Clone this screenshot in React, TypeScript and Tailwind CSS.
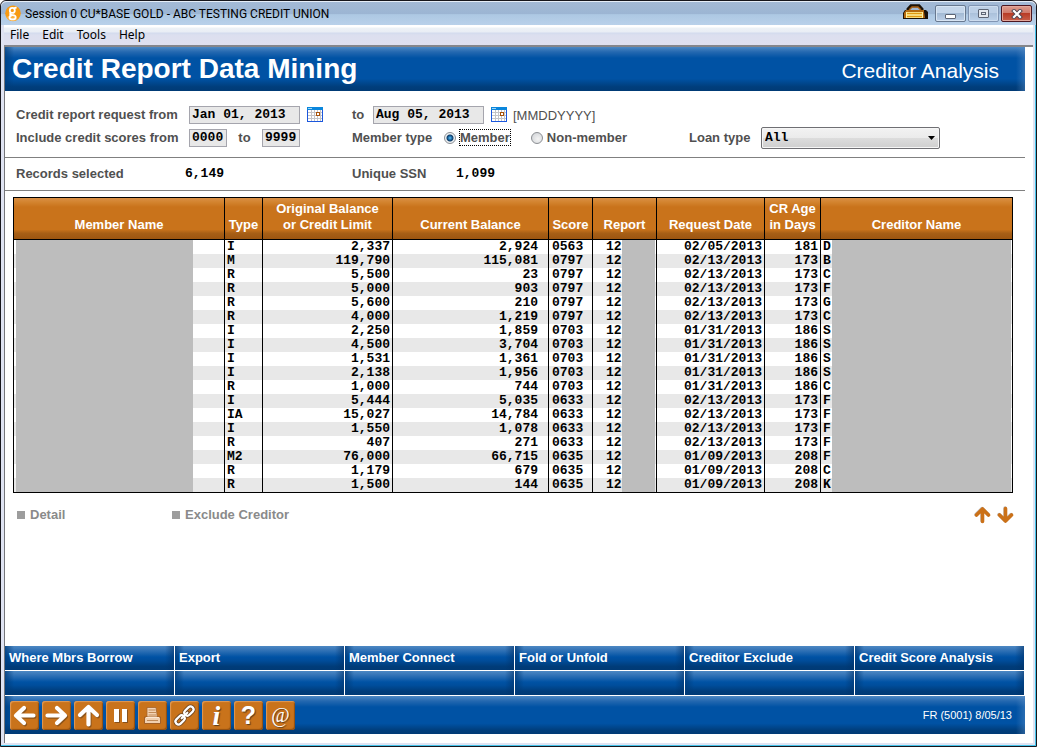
import React from "react";

type Row = [string, string, string, string, string, string, string];

const rows: Row[] = [
  ["I", "2,337", "2,924", "0563", "02/05/2013", "181", "D"],
  ["M", "119,790", "115,081", "0797", "02/13/2013", "173", "B"],
  ["R", "5,500", "23", "0797", "02/13/2013", "173", "C"],
  ["R", "5,000", "903", "0797", "02/13/2013", "173", "F"],
  ["R", "5,600", "210", "0797", "02/13/2013", "173", "G"],
  ["R", "4,000", "1,219", "0797", "02/13/2013", "173", "C"],
  ["I", "2,250", "1,859", "0703", "01/31/2013", "186", "S"],
  ["I", "4,500", "3,704", "0703", "01/31/2013", "186", "S"],
  ["I", "1,531", "1,361", "0703", "01/31/2013", "186", "S"],
  ["I", "2,138", "1,956", "0703", "01/31/2013", "186", "S"],
  ["R", "1,000", "744", "0703", "01/31/2013", "186", "C"],
  ["I", "5,444", "5,035", "0633", "02/13/2013", "173", "F"],
  ["IA", "15,027", "14,784", "0633", "02/13/2013", "173", "F"],
  ["I", "1,550", "1,078", "0633", "02/13/2013", "173", "F"],
  ["R", "407", "271", "0633", "02/13/2013", "173", "F"],
  ["M2", "76,000", "66,715", "0635", "01/09/2013", "208", "F"],
  ["R", "1,179", "679", "0635", "01/09/2013", "208", "C"],
  ["R", "1,500", "144", "0635", "01/09/2013", "208", "K"],
];

const columns: { label: string[]; width: string }[] = [
  { label: ["Member Name"], width: "w-[211px]" },
  { label: ["Type"], width: "w-[38px]" },
  { label: ["Original Balance", "or Credit Limit"], width: "w-[130px]" },
  { label: ["Current Balance"], width: "w-[156px]" },
  { label: ["Score"], width: "w-[44px]" },
  { label: ["Report"], width: "w-[64px]" },
  { label: ["Request Date"], width: "w-[108px]" },
  { label: ["CR Age", "in Days"], width: "w-[56px]" },
  { label: ["Creditor Name"], width: "" },
];

const mono = "font-['Liberation_Mono',monospace] text-[13px] font-bold text-black";
const field = `${mono} h-[18px] border border-[#a5a5ad] bg-[#e8e8e8] px-[2px] outline-none`;
const banner =
  "bg-[linear-gradient(to_right,rgba(0,60,122,0.7)_0px,rgba(0,60,122,0)_9px),linear-gradient(to_left,rgba(90,140,195,0.45)_0px,rgba(90,140,195,0)_9px),linear-gradient(to_bottom,#4d88c3_0px,#2468b0_5px,#0052a4_11px,#0052a4_72%,#003e7c_90%,#003a75_100%)]";
const keyFace =
  "bg-[linear-gradient(to_right,rgba(0,60,122,0.8)_0px,rgba(0,60,122,0)_9px),linear-gradient(to_left,rgba(0,50,105,0.6)_0px,rgba(0,50,105,0)_9px),linear-gradient(to_bottom,#4d88c3_0px,#3474b7_4px,#0052a4_11px,#004d9b_60%,#003c79_85%,#003a75_100%)]";

function CalendarIcon() {
  return (
    <svg width="16" height="15" viewBox="0 0 16 15" shapeRendering="crispEdges" aria-hidden="true">
      <rect width="16" height="15" fill="#1b57dd" />
      <rect x="1" y="3" width="14" height="11" fill="#fff" />
      <rect width="16" height="3" fill="#0a86dc" />
      <rect x="1" y="1" width="4" height="1" fill="#9fd4f5" />
      <path d="M4.5 3v11M7.5 3v11M10.5 3v11M13.5 3v11M1 5.5h14M1 8.5h14M1 11.5h14" stroke="#c4c4c8" />
      <rect x="9.5" y="5.5" width="3" height="3" fill="#fff" stroke="#a8520a" />
    </svg>
  );
}

function Calendar({ label }: { label: string }) {
  return (
    <button type="button" aria-label={label} className="flex">
      <CalendarIcon />
    </button>
  );
}

function Radio({ id, checked, label }: { id: string; checked?: boolean; label: string }) {
  return (
    <div className="flex items-center gap-[3px]">
      <input
        id={id}
        type="radio"
        name="member-type"
        defaultChecked={checked}
        className="size-3 appearance-none rounded-full border border-[#8b8e92] bg-[radial-gradient(circle_at_60%_60%,#f4f4f4,#cdd0d4)] checked:bg-[radial-gradient(circle,#5fc3f5_0px,#17639f_2px,#123d66_3px,#eef2f5_4px)]"
      />
      <label
        htmlFor={id}
        className={
          checked
            ? "border border-dotted border-black leading-[15px]"
            : "border border-transparent leading-[15px]"
        }
      >
        {label}
      </label>
    </div>
  );
}

const arrow = { fill: "none", strokeLinecap: "round", strokeLinejoin: "round" } as const;

function ArrowShape({ d }: { d: string }) {
  return (
    <svg width="25" height="25" viewBox="0 0 25 25" {...arrow} strokeWidth="4.2" aria-hidden="true">
      <path d={d} stroke="#5b3a1a" opacity="0.55" transform="translate(1 1.2)" />
      <path d={d} stroke="#fff" />
    </svg>
  );
}

const tools: { name: string; icon: React.ReactNode }[] = [
  { name: "Back", icon: <ArrowShape d="M21.5 12.5H4.5M12 5L4 12.5L12 20" /> },
  { name: "Forward", icon: <ArrowShape d="M3.5 12.5H20.5M13 5L21 12.5L13 20" /> },
  { name: "Up", icon: <ArrowShape d="M12.5 21.5V4.5M4 12L12.5 4L21 12" /> },
  {
    name: "Pause",
    icon: (
      <svg width="25" height="25" viewBox="0 0 25 25" aria-hidden="true">
        <path d="M7 7h5v13H7zM15 7h5v13h-5z" fill="#6b4420" opacity="0.7" />
        <path d="M6 6h5v13H6zM14 6h5v13h-5z" fill="#fff" />
      </svg>
    ),
  },
  {
    name: "Print",
    icon: (
      <svg width="25" height="25" viewBox="0 0 25 25" aria-hidden="true">
        <path d="M7 4.500h9l1.500 10H7z" fill="#f3d3b4" stroke="#a4642c" strokeWidth="0.8" />
        <path d="M8.500 7h7M8.500 9.500h7.500M8.500 12h8" stroke="#c08a58" strokeWidth="1" />
        <path d="M4.500 14h16v6.500h-16z" fill="#f1d0b0" stroke="#9a5820" strokeWidth="0.9" />
        <path d="M6 14.500h13" stroke="#fbe8d6" strokeWidth="1" />
        <path d="M7 17.500h11" stroke="#c08a58" />
      </svg>
    ),
  },
  {
    name: "Link",
    icon: (
      <svg width="25" height="25" viewBox="0 0 25 25" fill="none" aria-hidden="true">
        <g transform="rotate(-45 12.5 12.5)">
          <g stroke="#6b4420" strokeWidth="4">
            <rect x="1" y="9.500" width="10.500" height="6" rx="3" />
            <rect x="13.500" y="9.500" width="10.500" height="6" rx="3" />
            <path d="M8.500 12.500h8" strokeLinecap="round" />
          </g>
          <g stroke="#fff" strokeWidth="2.200">
            <rect x="1" y="9.500" width="10.500" height="6" rx="3" />
            <rect x="13.500" y="9.500" width="10.500" height="6" rx="3" />
            <path d="M8.500 12.500h8" strokeLinecap="round" />
          </g>
        </g>
      </svg>
    ),
  },
  {
    name: "Information",
    icon: (
      <span className="font-['Liberation_Serif',serif] text-[28px] font-bold italic leading-[25px] [text-shadow:1px_1px_1px_#5b3a1a]">
        i
      </span>
    ),
  },
  {
    name: "Help",
    icon: <span className="text-[25px] font-bold leading-[25px] [text-shadow:1px_1px_1px_#5b3a1a]">?</span>,
  },
  {
    name: "Email",
    icon: <span className="font-['Liberation_Serif',serif] text-[20px] leading-[25px] [text-shadow:1px_1px_1px_#5b3a1a]">@</span>,
  },
];

function ScrollArrow({ d, label }: { d: string; label: string }) {
  return (
    <button type="button" aria-label={label}>
      <svg width="17" height="18" viewBox="0 0 17 18" {...arrow} strokeWidth="3.6" aria-hidden="true">
        <path d={d} stroke="#8d8d95" opacity="0.6" transform="translate(-0.4 -0.4)" />
        <path d={d} stroke="#cb7118" />
      </svg>
    </button>
  );
}

function Cover() {
  return <span className="h-[14px] flex-1 bg-[#bdbdbd]" />;
}

export default function App() {
  const keys = [
    "Where Mbrs Borrow",
    "Export",
    "Member Connect",
    "Fold or Unfold",
    "Creditor Exclude",
    "Credit Score Analysis",
  ];
  return (
    <div className="flex min-h-screen flex-col rounded-t-md border border-[#16161c] bg-[#dfe3f2] font-['Liberation_Sans',Arial,sans-serif]">
      <header className="flex h-6 items-center rounded-t-md border-t border-[#e6eef8] bg-[linear-gradient(to_bottom,#a3bad6_0%,#9cb5d3_50%,#adc8e3_55%,#b9d1ea_100%)] pl-1 pr-1 font-[Roboto,sans-serif] text-[12px] text-black">
        <svg width="16" height="17" viewBox="0 0 16 17" aria-hidden="true">
          <circle cx="8" cy="8.3" r="7.8" fill="#f79a12" />
          <path d="M1 12a7.8 7.8 0 0 0 12 2.2L8 10z" fill="#fbb040" />
          <g fill="none" stroke="#fff" strokeWidth="1.8">
            <circle cx="7.3" cy="5.4" r="2.5" />
            <path d="M9 3.4l2.6-1M6 7.8c-2 1.600-.4 2.200 2 2.300 3.800.2 3.500 4.300-.4 4.300-4 0-3.800-3.500-1-3.900" />
          </g>
        </svg>
        <h1 className="ml-1 flex-1 whitespace-nowrap">Session 0 CU*BASE GOLD - ABC TESTING CREDIT UNION</h1>
        <svg width="25" height="16" viewBox="0 0 25 16" className="mb-1 mr-[7px]" aria-hidden="true">
          <path d="M5 8V5l3-3.200h8L19 5v3" fill="none" stroke="#1c1208" strokeWidth="3" />
          <path d="M6.500 8V5.500L9 3h6l2.500 2.500V8" fill="none" stroke="#a85e12" strokeWidth="1.500" />
          <path d="M2 6h21l2 2v7H0V9z" fill="#1c1208" />
          <path d="M3 6h18v2l1 6H1V9z" fill="#b4690f" />
          <path d="M3 8h17v6H3z" fill="#fff1a0" />
          <path d="M4 9.500h15M4 12.500h15" stroke="#e09a10" strokeWidth="1.400" />
        </svg>
        <div className="flex gap-[2px]">
          <button type="button" aria-label="Minimize" className="flex h-[17px] w-[31px] items-end justify-center rounded-[2px] border border-[#67788f] bg-[linear-gradient(to_bottom,#c5d6ea_45%,#a3bad4_50%,#bdd0e8)] pb-[2px] shadow-[inset_0_0_0_1px_#d8e5f3]">
            <span className="h-[5px] w-[11px] rounded-[1px] border border-[#5d6575] bg-white" />
          </button>
          <button type="button" aria-label="Maximize" className="flex h-[17px] w-[31px] items-center justify-center rounded-[2px] border border-[#8195b3] bg-[linear-gradient(to_bottom,#bccfe6_45%,#abc1db_50%,#bdd2ea)] shadow-[inset_0_0_0_1px_#cddcee]">
            <span className="flex h-[9px] w-[11px] items-center justify-center rounded-[1px] border border-[#5d6575] bg-[#e3e8f0]">
              <span className="h-[3px] w-[5px] border border-[#5d6575]" />
            </span>
          </button>
          <button type="button" aria-label="Close" className="flex h-[17px] w-[31px] items-center justify-center rounded-[2px] border border-[#4b1620] bg-[linear-gradient(to_bottom,#dd9d90_0%,#d07a6a_45%,#b83c26_50%,#c9604a_100%)] shadow-[inset_0_0_0_1px_#e3a79b]">
            <svg width="12" height="10" viewBox="0 0 12 10" strokeLinecap="square" aria-hidden="true">
              <path d="M3 2l6 6M9 2l-6 6" stroke="#4d4550" strokeWidth="4" />
              <path d="M3 2l6 6M9 2l-6 6" stroke="#fff" strokeWidth="2.200" />
            </svg>
          </button>
        </div>
      </header>

      <div className="flex flex-1 flex-col border-b border-r border-[#45c3ea] pb-[2px] pl-[3px] pr-[2px]">
        <nav className="flex h-[22px] items-center gap-[13px] border-b-2 border-[#85868b] bg-[linear-gradient(to_bottom,#ffffff_0px,#ffffff_2px,#edf2f6_3px,#e9edf5_7px,#d3dbee_8px,#dcdfef_10px,#dfe0ef_100%)] pl-[6px] font-['Noto_Sans',sans-serif] text-[12px] text-black">
          <button type="button">File</button>
          <button type="button">Edit</button>
          <button type="button">Tools</button>
          <button type="button">Help</button>
        </nav>

        <main className="flex flex-1 flex-col border-l border-[#75767b] bg-white pb-[9px] pr-2">
          <div className={`flex h-11 items-center justify-between pl-[7px] pr-[26px] text-white ${banner}`}>
            <h2 className="text-[28px] font-bold leading-8">Credit Report Data Mining</h2>
            <p className="pt-1 text-[21px] leading-6">Creditor Analysis</p>
          </div>

          <form className="grid grid-cols-[173px_163px_1fr] grid-rows-[23px_23px] items-center border-b border-[#808080] pb-2 pl-[11px] pt-3 text-[13px] font-bold text-[#505050]">
            <label htmlFor="date-from">Credit report request from</label>
            <div className="flex items-center gap-[7px]">
              <input id="date-from" defaultValue="Jan 01, 2013" className={`${field} w-[111px]`} />
              <Calendar label="Choose start date" />
            </div>
            <div className="flex items-center">
              <label htmlFor="date-to" className="w-[21px]">to</label>
              <input id="date-to" defaultValue="Aug 05, 2013" className={`${field} mr-[7px] w-[111px]`} />
              <Calendar label="Choose end date" />
              <span className="ml-[6px] pt-[2px] font-normal">[MMDDYYYY]</span>
            </div>

            <label htmlFor="score-from">Include credit scores from</label>
            <div className="flex items-center">
              <input id="score-from" defaultValue="0000" className={`${field} w-[38px]`} />
              <label htmlFor="score-to" className="w-[35px] text-center">to</label>
              <input id="score-to" defaultValue="9999" className={`${field} w-[38px]`} />
            </div>
            <div className="flex items-center">
              <span className="w-[92px]">Member type</span>
              <div className="flex w-[245px] gap-5">
                <Radio id="member" checked label="Member" />
                <Radio id="non-member" label="Non-member" />
              </div>
              <label htmlFor="loan-type" className="w-[72px]">Loan type</label>
              <div className="grid items-center">
                <select
                  id="loan-type"
                  className={`${mono} col-start-1 row-start-1 h-[22px] w-[179px] appearance-none rounded-[2px] border border-[#6f6f73] bg-[linear-gradient(to_bottom,#f2f2f2_0%,#ebebeb_48%,#dcdcdc_52%,#cfcfcf_100%)] pl-[3px] shadow-[inset_0_0_0_1px_#f6f6f6]`}
                >
                  <option>All</option>
                </select>
                <svg width="7" height="4" viewBox="0 0 7 4" className="pointer-events-none col-start-1 row-start-1 mr-[5px] justify-self-end" aria-hidden="true">
                  <path d="M0 0h7L3.500 4z" fill="#000" />
                </svg>
              </div>
            </div>
          </form>

          <dl className="grid h-[33px] grid-cols-[169px_167px_104px_1fr] items-center border-b border-[#808080] pl-[11px] text-[13px] font-bold text-[#505050]">
            <dt>Records selected</dt>
            <dd className={mono}>6,149</dd>
            <dt>Unique SSN</dt>
            <dd className={mono}>1,099</dd>
          </dl>

          <div className="pl-2 pr-3 pt-[6px]">
            <table className="w-full table-fixed border-separate border-spacing-0 border border-r-0 border-black">
              <thead>
                <tr className="h-[42px] bg-[linear-gradient(to_bottom,#d98f46_0px,#d3842f_4px,#c9731b_9px,#c9731b_75%,#a75f16_84%,#9b540f_100%)]">
                  {columns.map((c) => (
                    <th
                      key={c.label[0]}
                      scope="col"
                      className={`${c.width} whitespace-nowrap border-b border-r border-black p-0 pb-[6px] text-center align-bottom text-[13px] font-bold leading-4 text-white`}
                    >
                      {c.label.map((line) => (
                        <span key={line} className="block">{line}</span>
                      ))}
                    </th>
                  ))}
                </tr>
              </thead>
              <tbody className={`${mono} leading-[14px] [&_td]:h-[14px] [&_td]:border-r [&_td]:border-black [&_td]:p-0`}>
                {rows.map(([type, limit, balance, score, date, age, creditor], i) => (
                  <tr key={i} className="even:bg-[#e8e8e8]">
                    <td>
                      <div className="flex pl-[2px] pr-[31px]"><Cover /></div>
                    </td>
                    <td><div className="pl-[2px]">{type}</div></td>
                    <td className="text-right"><div className="pr-[2px]">{limit}</div></td>
                    <td className="text-right"><div className="pr-[10px]">{balance}</div></td>
                    <td><div className="pl-[3px]">{score}</div></td>
                    <td>
                      <div className="flex pl-[13px] pr-px"><span className="w-4">12</span><Cover /></div>
                    </td>
                    <td className="text-right"><div className="pr-[2px]">{date}</div></td>
                    <td className="text-right"><div className="pr-[2px]">{age}</div></td>
                    <td>
                      <div className="flex pl-[2px] pr-px"><span className="w-[9px]">{creditor}</span><Cover /></div>
                    </td>
                  </tr>
                ))}
              </tbody>
            </table>
          </div>

          <div className="flex items-center pl-3 pr-[11px] pt-3 text-[13px] font-bold text-[#8a8a8a]">
            <button type="button" className="flex w-[155px] items-center gap-[5px]">
              <span className="size-2 bg-[#9d9d9d]" />
              Detail
            </button>
            <button type="button" className="flex items-center gap-[5px]">
              <span className="size-2 bg-[#9d9d9d]" />
              Exclude Creditor
            </button>
            <div className="ml-auto flex gap-[6px]">
              <ScrollArrow label="Scroll up" d="M8.500 15.500V3M2.500 9L8.500 3L14.500 9" />
              <ScrollArrow label="Scroll down" d="M8.500 2.500V15M2.500 9L8.500 15L14.500 9" />
            </div>
          </div>

          <div className="mt-auto grid grid-cols-6 gap-px pb-px pr-px">
            {keys.map((k) => (
              <button key={k} type="button" className={`h-6 whitespace-nowrap pl-1 text-left text-[13px] font-bold text-white ${keyFace}`}>
                {k}
              </button>
            ))}
            {keys.map((k) => (
              <button key={k} type="button" disabled aria-label="Unassigned" className={`h-6 ${keyFace}`} />
            ))}
          </div>
          <footer className={`flex h-[38px] items-center justify-between pl-[5px] pr-[13px] text-white ${banner}`}>
            <div className="flex gap-[3px]">
              {tools.map((t) => (
                <button
                  key={t.name}
                  type="button"
                  aria-label={t.name}
                  className="flex size-[29px] items-center justify-center rounded-[3px] bg-[#c9731b] shadow-[inset_1px_1px_1px_#e09a55,inset_-1px_-1px_1px_#8f4f12]"
                >
                  {t.icon}
                </button>
              ))}
            </div>
            <span className="text-[11px]">FR (5001) 8/05/13</span>
          </footer>
        </main>
      </div>
    </div>
  );
}
